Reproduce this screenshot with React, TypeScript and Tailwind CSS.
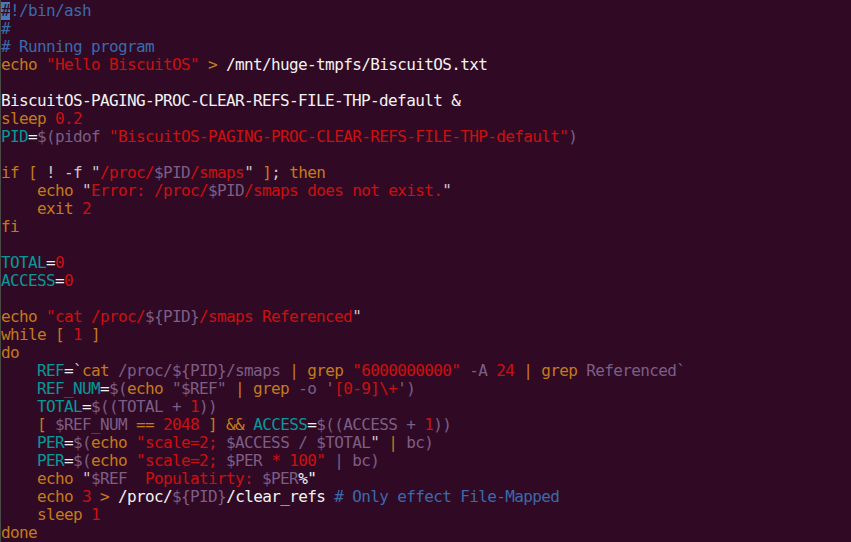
const colors: Record<string, string> = {
  c: "text-[#3b69ad]",
  o: "text-[#c47a1c]",
  r: "text-[#cc1010]",
  y: "text-[#06989a]",
  p: "text-[#7c5e86]",
  w: "text-[#f2f2f2]",
  q: "text-[#cfc3cc]",
};

type Seg = [string, string];

const lines: Seg[][] = [
  [["c", "!/bin/ash"]],
  [["c", "#"]],
  [["c", "# Running program"]],
  [["o", "echo "], ["r", '"Hello BiscuitOS"'], ["o", " > "], ["w", "/mnt/huge-tmpfs/BiscuitOS.txt"]],
  [],
  [["w", "BiscuitOS-PAGING-PROC-CLEAR-REFS-FILE-THP-default &"]],
  [["o", "sleep"], ["r", " 0.2"]],
  [["y", "PID"], ["w", "="], ["p", "$(pidof "], ["r", '"BiscuitOS-PAGING-PROC-CLEAR-REFS-FILE-THP-default"'], ["p", ")"]],
  [],
  [["o", "if [ "], ["q", "! -f "], ["q", '"'], ["r", "/proc/"], ["p", "$PID"], ["r", "/smaps"], ["q", '"'], ["o", " ]"], ["q", ";"], ["o", " then"]],
  [["o", "    echo "], ["q", '"'], ["r", "Error: /proc/"], ["p", "$PID"], ["r", "/smaps does not exist."], ["q", '"']],
  [["o", "    exit"], ["r", " 2"]],
  [["o", "fi"]],
  [],
  [["y", "TOTAL"], ["w", "="], ["r", "0"]],
  [["y", "ACCESS"], ["w", "="], ["r", "0"]],
  [],
  [["o", "echo "], ["r", '"cat /proc/'], ["p", "${PID}"], ["r", "/smaps Referenced"], ["q", '"']],
  [["o", "while [ "], ["r", "1"], ["o", " ]"]],
  [["o", "do"]],
  [
    ["y", "    REF"], ["w", "="], ["q", "`"], ["o", "cat"], ["p", " /proc/${PID}/smaps "], ["o", "| grep "],
    ["r", '"6000000000"'], ["p", " -A "], ["r", "24"], ["o", " | grep"], ["p", " Referenced`"],
  ],
  [
    ["y", "    REF_NUM"], ["w", "="], ["p", "$("], ["o", "echo"], ["p", ' "$REF" '], ["o", "| grep"],
    ["p", " -o '"], ["r", "[0-9]\\+"], ["p", "')"],
  ],
  [["y", "    TOTAL"], ["w", "="], ["p", "$((TOTAL + "], ["r", "1"], ["p", "))"]],
  [
    ["o", "    [ "], ["p", "$REF_NUM "], ["o", "== "], ["r", "2048"], ["o", " ] && "], ["y", "ACCESS"], ["w", "="],
    ["p", "$((ACCESS + "], ["r", "1"], ["p", "))"],
  ],
  [
    ["y", "    PER"], ["w", "="], ["p", "$("], ["o", "echo"], ["r", ' "scale=2; '], ["p", "$ACCESS / $TOTAL"],
    ["q", '"'], ["o", " | "], ["p", "bc)"],
  ],
  [
    ["y", "    PER"], ["w", "="], ["p", "$("], ["o", "echo"], ["r", ' "scale=2; '], ["p", "$PER"],
    ["r", ' * 100"'], ["p", " | bc)"],
  ],
  [["o", "    echo "], ["q", '"'], ["p", "$REF"], ["r", "  Populatirty: "], ["p", "$PER"], ["w", '%"']],
  [
    ["o", "    echo "], ["r", "3"], ["o", " > "], ["w", "/proc/"], ["p", "${PID}"], ["w", "/clear_refs"],
    ["c", " # Only effect File-Mapped"],
  ],
  [["o", "    sleep"], ["r", " 1"]],
  [["o", "done"]],
];

export default function App() {
  return (
    <div className="h-[542px] w-[851px] overflow-hidden border-l border-[#4a4a46] bg-[#300a24] pt-[2px] font-['DejaVu_Sans_Mono',monospace] text-[16px] tracking-[-0.63px]">
      {lines.map((segs, i) => (
        <div key={i} className="h-[18px] whitespace-pre leading-[18px]">
          {i === 0 && (
            <span className="inline-block h-[18px] w-[9px] bg-[#4a78b8] align-top text-[#300a24]">#</span>
          )}
          {segs.map(([k, t], j) => (
            <span key={j} className={colors[k]}>
              {t}
            </span>
          ))}
        </div>
      ))}
    </div>
  );
}
